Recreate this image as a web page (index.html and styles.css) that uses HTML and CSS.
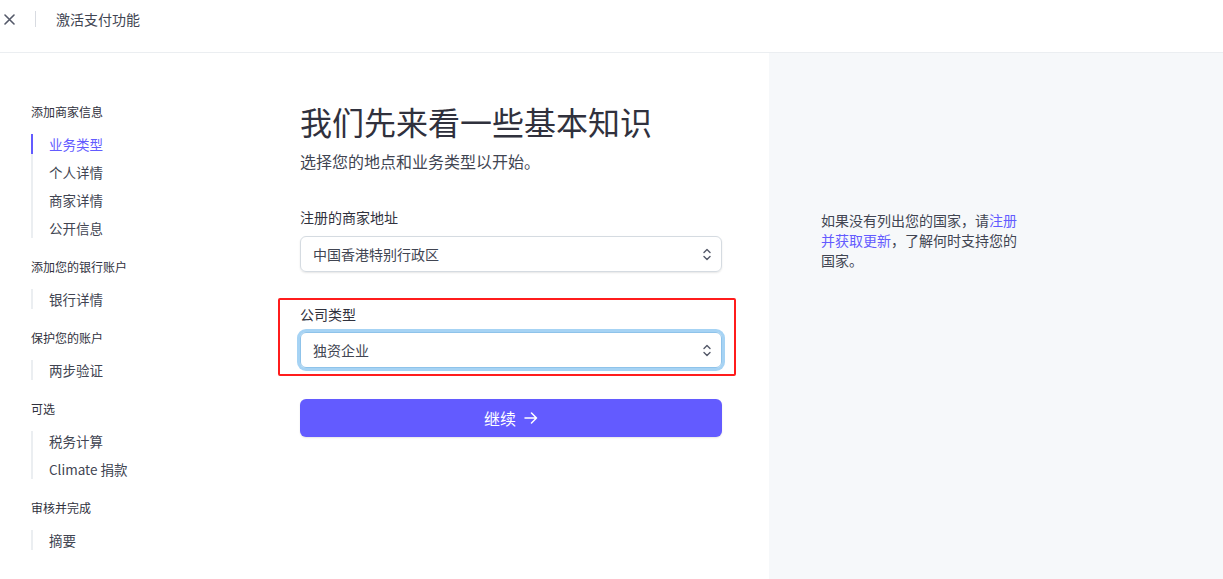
FILE: index.html
```html
<!DOCTYPE html>
<html lang="zh-CN">
<head>
    <meta charset="UTF-8">
    <title>激活支付功能</title>
    <link rel="stylesheet" href="styles.css">
</head>
<body>

    <!-- Top bar -->
    <header class="topbar">
        <span class="close-btn">
            <svg width="11" height="11" viewBox="0 0 11 11"><path d="M1 1L10 10M10 1L1 10" stroke="#545969" stroke-width="1.6" stroke-linecap="round"/></svg>
        </span>
        <span class="divider"></span>
        <span class="topbar-title">激活支付功能</span>
    </header>

    <div class="page">
        <div class="main-area">
            <!-- Steps -->
            <nav class="steps">
                <div class="step-title">添加商家信息</div>
                <ul class="step-list">
                    <li class="active">业务类型</li>
                    <li>个人详情</li>
                    <li>商家详情</li>
                    <li>公开信息</li>
                </ul>

                <div class="step-title">添加您的银行账户</div>
                <ul class="step-list">
                    <li>银行详情</li>
                </ul>

                <div class="step-title">保护您的账户</div>
                <ul class="step-list">
                    <li>两步验证</li>
                </ul>

                <div class="step-title">可选</div>
                <ul class="step-list">
                    <li>税务计算</li>
                    <li>Climate 捐款</li>
                </ul>

                <div class="step-title">审核并完成</div>
                <ul class="step-list">
                    <li>摘要</li>
                </ul>
            </nav>

            <!-- Form -->
            <main class="form-col">
                <h1>我们先来看一些基本知识</h1>
                <p class="subtitle">选择您的地点和业务类型以开始。</p>

                <div class="field first-field">
                    <label>注册的商家地址</label>
                    <div class="select">
                        <span>中国香港特别行政区</span>
                        <svg width="8" height="13" viewBox="0 0 8 13"><path d="M1 4.5L4 1.5L7 4.5M1 8.5L4 11.5L7 8.5" fill="none" stroke="#545969" stroke-width="1.4" stroke-linecap="round" stroke-linejoin="round"/></svg>
                    </div>
                </div>

                <div class="field marked">
                    <label>公司类型</label>
                    <div class="select focused">
                        <span>独资企业</span>
                        <svg width="8" height="13" viewBox="0 0 8 13"><path d="M1 4.5L4 1.5L7 4.5M1 8.5L4 11.5L7 8.5" fill="none" stroke="#545969" stroke-width="1.4" stroke-linecap="round" stroke-linejoin="round"/></svg>
                    </div>
                </div>

                <button class="continue-btn">继续
                    <svg width="14" height="12" viewBox="0 0 14 12"><path d="M1 6H12.5M7.5 1L12.5 6L7.5 11" fill="none" stroke="#fff" stroke-width="1.5" stroke-linecap="round" stroke-linejoin="round"/></svg>
                </button>
            </main>
        </div>

        <!-- Side note -->
        <aside class="side-panel">
            <p>如果没有列出您的国家，请<a href="#">注册并获取更新</a>，了解何时支持您的国家。</p>
        </aside>
    </div>

</body>
</html>
```

FILE: styles.css
```css
/* Basic Styling */
body {
    margin: 0;
    font-family: "Noto Sans CJK SC", "Noto Sans", sans-serif;
    color: #414552;
    background-color: #fff;
    height: 579px;
    display: flex;
    flex-direction: column;
}

.topbar {
    height: 53px;
    box-sizing: border-box;
    padding-bottom: 14px;
    border-bottom: 1px solid #ebeef1;
    display: flex;
    align-items: center;
    flex-shrink: 0;
}

.close-btn {
    display: flex;
    margin-left: 4px;
    margin-top: 1px;
}

.divider {
    width: 1px;
    height: 16px;
    background-color: #d8dbe1;
    margin-left: 20px;
}

.topbar-title {
    font-size: 14px;
    margin-left: 20px;
    margin-top: -1px;
    color: #414552;
}

.page {
    flex: 1;
    display: flex;
}

.main-area {
    width: 769px;
    display: flex;
}

/* Steps sidebar */
.steps {
    width: 300px;
    padding: 51px 0 0 31px;
    box-sizing: border-box;
}

.step-title {
    font-size: 12px;
    line-height: 16px;
    color: #30313d;
    margin-bottom: 14px;
}

.step-list {
    list-style: none;
    margin: 0 0 21px 0;
    padding: 0;
    border-left: 2px solid #ebeef1;
    display: flex;
    flex-direction: column;
    gap: 8px;
}

.step-list li {
    font-size: 13.5px;
    line-height: 20px;
    padding-left: 16px;
    margin-left: -2px;
    border-left: 2px solid transparent;
    color: #414552;
}

.step-list li.active {
    border-left-color: #635bff;
    color: #635bff;
}

/* Form column */
.form-col {
    width: 422px;
    padding-top: 48px;
}

.form-col h1 {
    margin: 0;
    font-size: 32px;
    font-weight: 400;
    line-height: 40px;
    color: #30313d;
}

.subtitle {
    margin: 8px 0 0;
    font-size: 16px;
    line-height: 24px;
    color: #414552;
}

.field {
    display: flex;
    flex-direction: column;
}

.field label {
    font-size: 14px;
    line-height: 20px;
    color: #30313d;
    margin-bottom: 9px;
}

.first-field {
    margin-top: 34px;
}

.select {
    height: 36px;
    border: 1px solid #d5dbe1;
    border-radius: 6px;
    box-shadow: 0 1px 2px rgba(0, 0, 0, 0.1);
    box-sizing: border-box;
    display: flex;
    align-items: center;
    justify-content: space-between;
    padding: 0 10px 0 12px;
    font-size: 14px;
    color: #414552;
}

.select.focused {
    border-color: #8fc3ea;
    box-shadow: 0 0 0 3px #a6d3f4;
    margin-top: -1px;
}

/* Red annotation box round the company field */
.marked {
    position: relative;
    margin-top: 32px;
}

.marked::after {
    content: "";
    position: absolute;
    left: -22px;
    right: -14px;
    top: -6px;
    bottom: -8px;
    border: 2px solid #ff1c1c;
    border-radius: 2px;
}

.continue-btn {
    margin-top: 31px;
    width: 100%;
    height: 38px;
    background-color: #635bff;
    color: #fff;
    border: none;
    border-radius: 6px;
    font-family: inherit;
    font-size: 16px;
    display: flex;
    align-items: center;
    justify-content: center;
    gap: 8px;
    box-shadow: 0 1px 2px rgba(0, 0, 0, 0.1);
}

/* Right panel */
.side-panel {
    flex: 1;
    background-color: #f6f8fa;
    padding: 157px 0 0 52px;
}

.side-panel p {
    margin: 0;
    width: 200px;
    font-size: 14px;
    line-height: 20px;
    color: #414552;
}

.side-panel a {
    color: #635bff;
    text-decoration: none;
}
```
